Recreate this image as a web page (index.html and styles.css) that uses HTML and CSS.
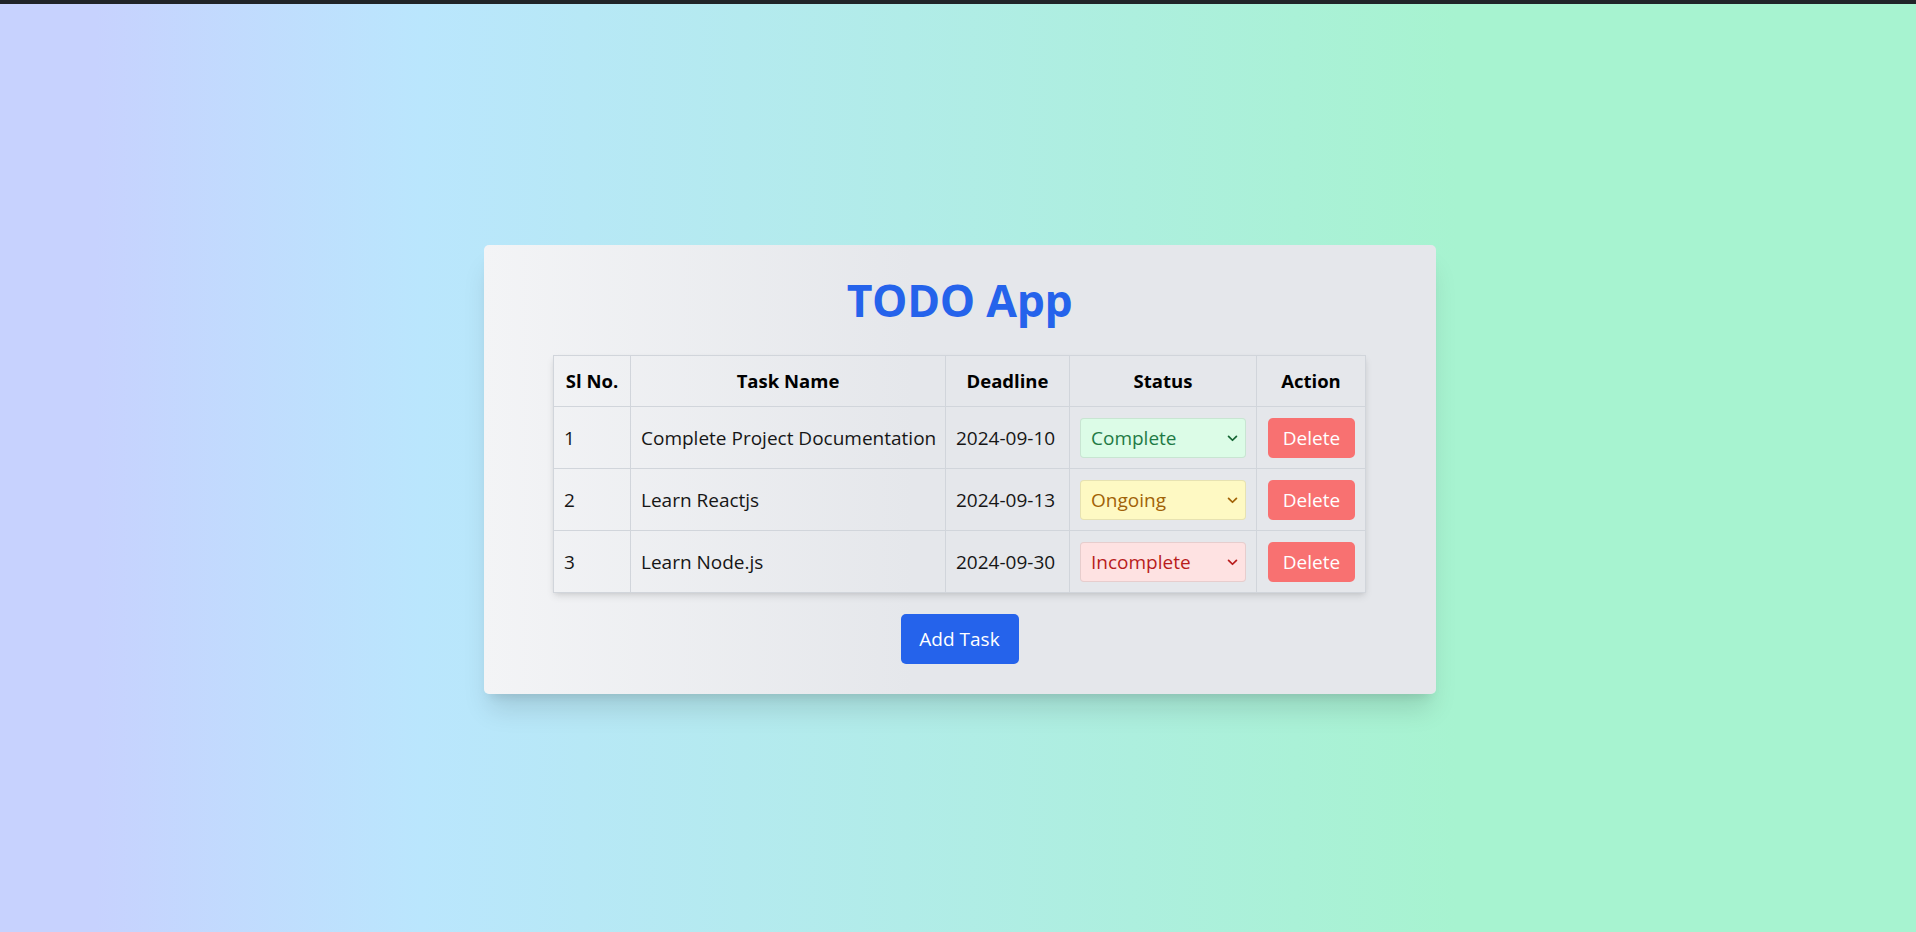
FILE: index.html
```html
<!DOCTYPE html>
<html lang="en">
<head>
<meta charset="utf-8">
<title>TODO App</title>
<link rel="stylesheet" href="styles.css">
</head>
<body>
<div class="topbar"></div>
<main class="page">
  <section class="card">
    <h1 class="title">TODO App</h1>
    <table class="tasks">
      <colgroup>
        <col class="c-sl"><col class="c-name"><col class="c-date"><col class="c-status"><col class="c-action">
      </colgroup>
      <thead>
        <tr><th>Sl No.</th><th>Task Name</th><th>Deadline</th><th>Status</th><th>Action</th></tr>
      </thead>
      <tbody>
        <tr>
          <td>1</td><td>Complete Project Documentation</td><td>2024-09-10</td>
          <td><span class="sel complete"><select><option selected>Complete</option><option>Ongoing</option><option>Incomplete</option></select><svg class="chev" viewBox="0 0 12 8" width="12" height="8"><path d="M1.5 1.5 6 6l4.5-4.5" fill="none" stroke="currentColor" stroke-width="2" stroke-linecap="round" stroke-linejoin="round"/></svg></span></td>
          <td><button class="del">Delete</button></td>
        </tr>
        <tr>
          <td>2</td><td>Learn Reactjs</td><td>2024-09-13</td>
          <td><span class="sel ongoing"><select><option>Complete</option><option selected>Ongoing</option><option>Incomplete</option></select><svg class="chev" viewBox="0 0 12 8" width="12" height="8"><path d="M1.5 1.5 6 6l4.5-4.5" fill="none" stroke="currentColor" stroke-width="2" stroke-linecap="round" stroke-linejoin="round"/></svg></span></td>
          <td><button class="del">Delete</button></td>
        </tr>
        <tr>
          <td>3</td><td>Learn Node.js</td><td>2024-09-30</td>
          <td><span class="sel incomplete"><select><option>Complete</option><option>Ongoing</option><option selected>Incomplete</option></select><svg class="chev" viewBox="0 0 12 8" width="12" height="8"><path d="M1.5 1.5 6 6l4.5-4.5" fill="none" stroke="currentColor" stroke-width="2" stroke-linecap="round" stroke-linejoin="round"/></svg></span></td>
          <td><button class="del">Delete</button></td>
        </tr>
      </tbody>
    </table>
    <div class="actions"><button class="add">Add Task</button></div>
  </section>
</main>
</body>
</html>
```
FILE: styles.css
```css
* { box-sizing: border-box; }
html, body { margin: 0; height: 100%; }
body {
  font-family: "Open Sans", "Noto Sans", sans-serif;
  background: linear-gradient(to right, #c7d2fe 5%, #bae6fd 22%, #a7f3d0 76%);
  color: #111;
  display: flex;
  flex-direction: column;
}
.topbar { height: 4px; background: #202428; flex: none; }
.page {
  flex: 1;
  display: flex;
  align-items: center;
  justify-content: center;
}
.card {
  width: 952px;
  padding: 30px 30px;
  border-radius: 5px;
  background: linear-gradient(to right, #f3f4f6, #e5e7eb 45%);
  box-shadow: 0 20px 25px -5px rgba(0,0,0,0.12), 0 8px 10px -6px rgba(0,0,0,0.1);
  margin-left: 3px;
  margin-top: 3px;
}
.title {
  margin: 0 0 30px;
  text-align: center;
  font-size: 44.5px;
  line-height: 50px;
  font-weight: 700;
  color: #2563eb;
  letter-spacing: -0.3px;
}
.tasks {
  margin: 0 auto;
  border-collapse: collapse;
  table-layout: fixed;
  width: 812px;
  font-size: 19px;
  box-shadow: 0 4px 8px -1px rgba(0,0,0,0.1), 0 2px 5px -2px rgba(0,0,0,0.1);
}
.c-sl { width: 77px; }
.c-name { width: 315px; }
.c-date { width: 124px; }
.c-status { width: 187px; }
.c-action { width: 109px; }
.tasks th, .tasks td {
  border: 1px solid #d1d5db;
  white-space: nowrap;
}
.tasks th {
  padding: 10px 6px;
  line-height: 30px;
  font-size: 18.5px;
  font-weight: 700;
  text-align: center;
  color: #000;
}
.tasks td {
  padding: 10.5px 10px;
  line-height: 30px;
  text-align: left;
  color: #161616;
}
.sel {
  position: relative;
  display: block;
}
.sel select {
  appearance: none;
  -webkit-appearance: none;
  display: block;
  width: 100%;
  height: 40px;
  padding: 0 30px 0 10px;
  font: inherit;
  line-height: 30px;
  border: 1px solid rgba(0,0,0,0.09);
  border-radius: 4px;
  outline: none;
}
.chev {
  position: absolute;
  right: 8px;
  top: 17px;
  width: 11px;
  height: 7px;
  pointer-events: none;
}
.complete select { background: #dcfce7; color: #1f7a45; }
.complete .chev { color: #166534; }
.ongoing select { background: #fef9c3; color: #a16207; }
.ongoing .chev { color: #a16207; }
.incomplete select { background: #fee2e2; color: #b91c1c; }
.incomplete .chev { color: #b91c1c; }
.del {
  display: block;
  height: 40px;
  width: 87px;
  padding: 0;
  margin-left: 1px;
  border: none;
  border-radius: 5px;
  background: #f87171;
  color: #fff;
  font-family: inherit;
  font-size: 19px;
  line-height: 30px;
}
.actions {
  display: flex;
  justify-content: center;
  margin-top: 21px;
}
.add {
  height: 50px;
  width: 118px;
  padding: 0;
  border: none;
  border-radius: 5px;
  background: #2563eb;
  color: #fff;
  font-family: inherit;
  font-size: 19px;
  line-height: 30px;
}
```
